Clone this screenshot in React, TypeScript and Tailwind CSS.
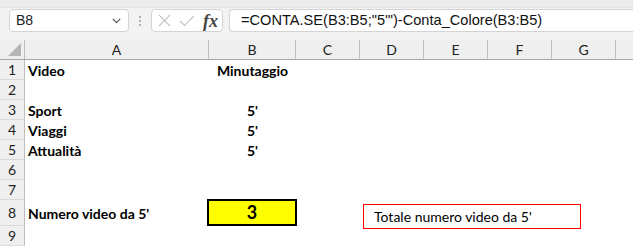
import React from "react";

const cols = ["A", "B", "C", "D", "E", "F", "G", ""];
const colW = ["w-[184px]", "w-[87px]", "w-[64px]", "w-[64px]", "w-[64px]", "w-[64px]", "w-[64px]", "flex-1"];

type Row = { n: number; h: string; a?: string; b?: string };
const rows: Row[] = [
  { n: 1, h: "h-[20px]", a: "Video", b: "Minutaggio" },
  { n: 2, h: "h-[20px]" },
  { n: 3, h: "h-[20px]", a: "Sport", b: "5'" },
  { n: 4, h: "h-[20px]", a: "Viaggi", b: "5'" },
  { n: 5, h: "h-[20px]", a: "Attualità", b: "5'" },
  { n: 6, h: "h-[20px]" },
  { n: 7, h: "h-[20px]" },
  { n: 8, h: "h-[26px]", a: "Numero video da 5'" },
  { n: 9, h: "h-[20px]" },
];

export default function App() {
  return (
    <div className="w-[633px] h-[246px] overflow-hidden bg-white relative" style={{ fontFamily: "Lato, 'Open Sans', sans-serif" }}>
      {/* toolbar */}
      <div className="h-[40px] bg-[#f3f3f3] flex flex-col">
        <div className="h-[8px] bg-[#ebebeb] border-b border-[#e3e3e3]" />
        <div className="flex items-start pl-[9px] pt-[1px]">
          <div className="w-[120px] h-[23px] bg-white border border-[#d4d4d4] rounded-[4px] flex items-center pl-[6px] pr-[7px] justify-between">
            <span className="text-[14px] text-[#222]" style={{ fontFamily: "'Liberation Sans', Arial, sans-serif" }}>B8</span>
            <svg width="9" height="6" viewBox="0 0 9 6" fill="none">
              <path d="M0.8 0.8 L4.5 4.6 L8.2 0.8" stroke="#555" strokeWidth="1.2" />
            </svg>
          </div>
          <div className="w-[22px] h-[23px] flex flex-col items-center justify-center gap-[2px]">
            <div className="w-[2px] h-[2px] bg-[#9a9a9a] rounded-full" />
            <div className="w-[2px] h-[2px] bg-[#9a9a9a] rounded-full" />
            <div className="w-[2px] h-[2px] bg-[#9a9a9a] rounded-full" />
          </div>
          <div className="w-[72px] h-[23px] bg-white border border-[#d4d4d4] rounded-[4px] flex items-center pl-[6px] gap-[8px]">
            <svg width="13" height="13" viewBox="0 0 13 13">
              <path d="M1 1 L12 12 M12 1 L1 12" stroke="#c4c4c4" strokeWidth="1.1" />
            </svg>
            <svg width="16" height="12" viewBox="0 0 16 12">
              <path d="M1 6 L5.5 10.5 L15 1" stroke="#c4c4c4" strokeWidth="1.1" fill="none" />
            </svg>
            <span className="text-[18px] italic font-bold text-[#444] leading-none" style={{ fontFamily: "'Liberation Serif', serif" }}>fx</span>
          </div>
          <div className="ml-[6px] flex-1 h-[23px] bg-white border border-[#d4d4d4] border-r-0 rounded-l-[4px] flex items-center pl-[11px]">
            <span className="text-[14.6px] text-[#111]" style={{ fontFamily: "'Liberation Sans', Arial, sans-serif" }}>=CONTA.SE(B3:B5;"5'")-Conta_Colore(B3:B5)</span>
          </div>
        </div>
      </div>

      {/* column header */}
      <div className="flex h-[20px] bg-[#efefef] border-b border-[#a8a8a8]">
        <div className="w-[25px] border-r border-[#bdbdbd] relative">
          <svg className="absolute right-[3px] bottom-[3px]" width="13" height="13" viewBox="0 0 13 13">
            <path d="M13 0 L13 13 L0 13 Z" fill="#b5b5b5" />
          </svg>
        </div>
        {cols.map((c, i) => (
          <div key={i} className={`${colW[i]} ${i < 7 ? "border-r border-[#bdbdbd]" : ""} flex items-center justify-center text-[14px] text-[#222]`}>
            {c}
          </div>
        ))}
      </div>

      {/* rows */}
      {rows.map((r) => (
        <div key={r.n} className={`flex ${r.h}`}>
          <div className="w-[25px] bg-[#efefef] border-r border-b border-r-[#bdbdbd] border-b-[#d9d9d9] flex items-center justify-center text-[14px] text-[#222]">
            {r.n}
          </div>
          <div className="w-[184px] flex items-center pl-[3px] text-[14px] font-bold text-black">
            {r.a}
          </div>
          <div className="w-[87px] flex items-center justify-center text-[14px] font-bold text-black relative">
            {r.n === 8 ? (
              <div className="absolute left-[-2px] right-[-1px] top-[-1px] bottom-0 bg-[#ffff00] border-2 border-black flex items-center justify-center text-[18px] font-bold">
                3
              </div>
            ) : (
              r.b
            )}
          </div>
          <div className="flex-1" />
        </div>
      ))}

      {/* text box overlay */}
      <div className="absolute left-[363px] top-[204px] w-[218px] h-[25px] border border-[#ff0000] bg-white flex items-center pl-[10px] text-[14px] text-black">
        Totale numero video da 5'
      </div>
    </div>
  );
}
